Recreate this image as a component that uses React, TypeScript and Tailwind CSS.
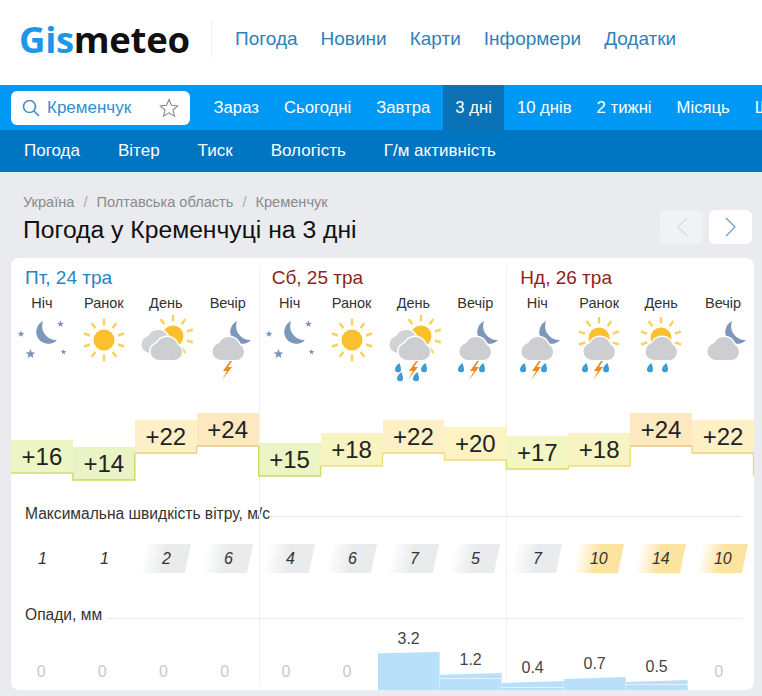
import React from "react";

const SANS = "font-['Liberation_Sans',Arial,sans-serif]";

type IconParts = {
  stars?: boolean;
  sun?: boolean;
  behindSun?: boolean;
  halfSun?: boolean;
  moon?: boolean;
  cloud?: boolean;
  backCloud?: boolean;
  bolt?: boolean;
  drops?: number[][];
};

const twoDrops = [
  [18, 52],
  [39, 52],
];
const fourDrops = [
  [16, 52],
  [42, 52],
  [18, 61],
  [34, 61],
];

const icons: IconParts[] = [
  { stars: true, moon: true },
  { sun: true },
  { behindSun: true, backCloud: true, cloud: true },
  { moon: true, cloud: true, bolt: true },
  { stars: true, moon: true },
  { sun: true },
  { behindSun: true, backCloud: true, cloud: true, bolt: true, drops: fourDrops },
  { moon: true, cloud: true, bolt: true, drops: twoDrops },
  { moon: true, cloud: true, bolt: true, drops: twoDrops },
  { halfSun: true, cloud: true, bolt: true, drops: twoDrops },
  {
    halfSun: true,
    cloud: true,
    drops: [
      [21, 52],
      [36, 52],
    ],
  },
  { moon: true, cloud: true },
];

const Rays = ({ cx, cy }: { cx: number; cy: number }) => {
  const rays = [];
  for (let a = 0; a < 360; a += 36) {
    const r = (a * Math.PI) / 180;
    rays.push(
      <line
        key={a}
        x1={cx + Math.sin(r) * 14.5}
        y1={cy - Math.cos(r) * 14.5}
        x2={cx + Math.sin(r) * 21}
        y2={cy - Math.cos(r) * 21}
        stroke="#f8d25c"
        strokeWidth="2.4"
      />
    );
  }
  return <g>{rays}</g>;
};

const CloudShape = ({ dx = 0, dy = 0, fill, stroke }: { dx?: number; dy?: number; fill: string; stroke?: string }) => (
  <g transform={`translate(${dx} ${dy})`} fill={fill} stroke={stroke} strokeWidth={stroke ? 3 : 0}>
    <circle cx="24" cy="36.500" r="8.500" />
    <circle cx="32" cy="33" r="11" />
    <circle cx="39" cy="37" r="8" />
    <rect x="24" y="36" width="15" height="9" />
  </g>
);

const Star = ({ x, y, r }: { x: number; y: number; r: number }) => {
  const pts = [];
  for (let i = 0; i < 10; i++) {
    const a = (i * Math.PI) / 5;
    const d = i % 2 === 0 ? r : r * 0.45;
    pts.push(`${x + Math.sin(a) * d},${y - Math.cos(a) * d}`);
  }
  return <polygon points={pts.join(" ")} fill="#7c97b9" />;
};

const Drop = ({ x, y }: { x: number; y: number }) => (
  <path
    d={`M${x + 2.5} ${y - 4}c-2 1.6 -4.5 4 -4.5 6.2a3 3 0 0 0 6 .2c0 -2 -.8 -4.2 -1.5 -6.4z`}
    fill="#3c9bd8"
  />
);

const WeatherIcon = ({ parts }: { parts: IconParts }) => {
  return (
    <svg width="62" height="70" viewBox="0 0 62 70" className="block mx-auto">
      {parts.stars && (
        <g>
          <Star x={10} y={19} r={3.500} />
          <Star x={49.500} y={9} r={3.500} />
          <Star x={19.500} y={39} r={5} />
          <Star x={52.500} y={37} r={3} />
        </g>
      )}
      {parts.moon && (
        <path
          transform={parts.stars ? undefined : "translate(8 0)"}
          d="M32 6A12 12 0 1 0 46 25A14 14 0 0 1 32 6z"
          fill="#7c97b9"
        />
      )}
      {parts.sun && (
        <g>
          <Rays cx={31} cy={25} />
          <circle cx="31" cy="25" r="10.500" fill="#fbc02d" />
        </g>
      )}
      {parts.behindSun && (
        <g>
          <Rays cx={38} cy={21} />
          <circle cx="38" cy="21" r="10.500" fill="#fbc02d" />
        </g>
      )}
      {parts.halfSun && (
        <g>
          <Rays cx={31} cy={23} />
          <circle cx="31" cy="23" r="10.500" fill="#fbc02d" />
        </g>
      )}
      {parts.backCloud && <CloudShape dx={-9} dy={-7} fill="#fff" stroke="#fff" />}
      {parts.backCloud && <CloudShape dx={-9} dy={-7} fill="#d0d2d5" />}
      {parts.cloud && <CloudShape fill="#fff" stroke="#fff" />}
      {parts.cloud && <CloudShape fill="#ccced1" />}
      {parts.drops && parts.drops.map(([x, y]) => <Drop key={`${x}-${y}`} x={x - 2} y={y} />)}
      {parts.bolt && <path d="M33 46l-7 10h4l-5 9 10-13h-4l4-6z" fill="#ee8a22" />}
    </svg>
  );
};

const times = ["Ніч", "Ранок", "День", "Вечір"];

const days = [
  { label: "Пт, 24 тра", cls: "text-[#1f86c2] pl-[14px]" },
  { label: "Сб, 25 тра", cls: "text-[#8f1f22] pl-[13px]" },
  { label: "Нд, 26 тра", cls: "text-[#8f1f22] pl-[14px]" },
];

const temps = [
  { t: "+16", mt: "mt-[55px]", bg: "bg-[#eef5c4]" },
  { t: "+14", mt: "mt-[62px]", bg: "bg-[#e8f3c6]" },
  { t: "+22", mt: "mt-[35px]", bg: "bg-[#fdefc6]" },
  { t: "+24", mt: "mt-[28px]", bg: "bg-[#fde8c0]" },
  { t: "+15", mt: "mt-[58px]", bg: "bg-[#ebf4c4]" },
  { t: "+18", mt: "mt-[48px]", bg: "bg-[#f8f4c2]" },
  { t: "+22", mt: "mt-[35px]", bg: "bg-[#fdefc6]" },
  { t: "+20", mt: "mt-[42px]", bg: "bg-[#fdf2c2]" },
  { t: "+17", mt: "mt-[51px]", bg: "bg-[#f3f5c2]" },
  { t: "+18", mt: "mt-[48px]", bg: "bg-[#f8f4c2]" },
  { t: "+24", mt: "mt-[28px]", bg: "bg-[#fde8c0]" },
  { t: "+22", mt: "mt-[35px]", bg: "bg-[#fdefc6]" },
];

// bottom edge of each temperature step, measured from the top of the chart
const stepBottoms = [88, 95, 68, 61, 91, 81, 68, 75, 84, 81, 61, 68, 91];
const stepColors = [
  "#cfdd62",
  "#c6d85c",
  "#ecd47e",
  "#e9c77f",
  "#c9d95e",
  "#eadf72",
  "#ecd47e",
  "#f0dc70",
  "#dfdc5c",
  "#eadf72",
  "#e9c77f",
  "#ecd47e",
];

const grayStripe = "bg-linear-to-r from-white to-[#e9ebed] to-50%";
const yellowStripe = "bg-linear-to-r from-white to-[#fde3a0] to-50%";

const wind = [
  { v: "1", bg: "" },
  { v: "1", bg: "" },
  { v: "2", bg: grayStripe },
  { v: "6", bg: grayStripe },
  { v: "4", bg: grayStripe },
  { v: "6", bg: grayStripe },
  { v: "7", bg: grayStripe },
  { v: "5", bg: grayStripe },
  { v: "7", bg: grayStripe },
  { v: "10", bg: yellowStripe },
  { v: "14", bg: yellowStripe },
  { v: "10", bg: yellowStripe },
];

const rain = [
  { v: "0", bar: "", line: "" },
  { v: "0", bar: "", line: "" },
  { v: "0", bar: "", line: "" },
  { v: "0", bar: "", line: "" },
  { v: "0", bar: "", line: "" },
  { v: "0", bar: "", line: "" },
  { v: "3.2", bar: "h-[38px] [clip-path:polygon(0_3%,100%_0,100%_100%,0_100%)]", line: "" },
  { v: "1.2", bar: "h-[17px] [clip-path:polygon(0_10%,100%_0,100%_100%,0_100%)]", line: "mt-[5px]" },
  { v: "0.4", bar: "h-[9px] [clip-path:polygon(0_22%,100%_0,100%_100%,0_100%)]", line: "mt-[6px]" },
  { v: "0.7", bar: "h-[13px] [clip-path:polygon(0_15%,100%_0,100%_100%,0_100%)]", line: "" },
  { v: "0.5", bar: "h-[10px] [clip-path:polygon(0_20%,100%_0,100%_100%,0_100%)]", line: "mt-[4px]" },
  { v: "0", bar: "", line: "" },
];

const topLinks = ["Погода", "Новини", "Карти", "Інформери", "Додатки"];
const tabs = ["Зараз", "Сьогодні", "Завтра", "3 дні", "10 днів", "2 тижні", "Місяць", "Ще"];
const subLinks = ["Погода", "Вітер", "Тиск", "Вологість", "Г/м активність"];

const App = () => {
  return (
    <div className={`${SANS} w-[762px] h-[696px] overflow-hidden bg-[#e9ebee] text-[#333]`}>
      <header className="h-[85px] bg-white flex items-center pb-[7px]">
        <div className="ml-[19px] w-[173px] text-[36.500px] leading-none font-bold tracking-[-0.3px] font-['Open_Sans',sans-serif] text-[#111]">
          <span className="text-[#1e96e8]">Gis</span>meteo
        </div>
        <div className="ml-[19px] w-px h-[37px] bg-[#eeeeee]" />
        <nav className="ml-[23px] flex gap-[23px] text-[19px] text-[#2f7fb9]">
          {topLinks.map((l) => (
            <span key={l}>{l}</span>
          ))}
        </nav>
      </header>

      <div className="h-[45px] bg-[#0098f5] flex items-center">
        <div className="ml-[11px] w-[179px] shrink-0 h-[34px] bg-white rounded-[6px] flex items-center pl-[11px] pr-[11px]">
          <svg width="18" height="18" viewBox="0 0 18 18" fill="none" stroke="#4f8fbe" strokeWidth="1.700">
            <circle cx="7.500" cy="7.500" r="6" />
            <path d="M12 12l5 5" />
          </svg>
          <span className="ml-[7px] text-[17px] text-[#2d8fd2]">Кременчук</span>
          <svg width="20" height="20" viewBox="0 0 20 20" className="ml-auto" fill="none" stroke="#8a8a8a" strokeWidth="1.100">
            <path d="M10 1.500l2.500 5.800 6.300.6-4.800 4.100 1.500 6.200-5.500-3.300-5.500 3.300 1.500-6.200L1.200 7.900l6.300-.6z" />
          </svg>
        </div>
        <div className="ml-[11px] flex h-full min-w-0 text-[16.700px] text-white overflow-hidden">
          {tabs.map((t) => (
            <span
              key={t}
              className={`px-[12.500px] flex items-center whitespace-nowrap ${t === "3 дні" ? "bg-[#0b72b6]" : ""}`}
            >
              {t}
            </span>
          ))}
        </div>
      </div>

      <div className="h-[42px] bg-[#0076c2] flex items-center pl-[24px] gap-[38px] text-[17px] text-white">
        {subLinks.map((l) => (
          <span key={l}>{l}</span>
        ))}
      </div>

      <div className="mt-[22px] h-[18px] ml-[23px] flex items-center text-[14.600px] text-[#8a8a8a]">
        <span>Україна</span>
        <span className="mx-[9px] text-[#aaa]">/</span>
        <span>Полтавська область</span>
        <span className="mx-[9px] text-[#aaa]">/</span>
        <span>Кременчук</span>
      </div>

      <div className="mt-[-2px] h-[34px] pl-[23px] pr-[10px] flex items-center justify-between">
        <h1 className="pt-[5px] text-[24.700px] text-[#111]">Погода у Кременчуці на 3 дні</h1>
        <div className="flex gap-[6px]">
          <div className="w-[43px] h-[34px] rounded-[6px] bg-[#f1f2f4] flex items-center justify-center">
            <svg width="12" height="20" viewBox="0 0 12 20" fill="none" stroke="#d5dbe2" strokeWidth="1.200">
              <path d="M11 1L2 10l9 9" />
            </svg>
          </div>
          <div className="w-[43px] h-[34px] rounded-[6px] bg-white flex items-center justify-center">
            <svg width="12" height="20" viewBox="0 0 12 20" fill="none" stroke="#6f9cc4" strokeWidth="1.200">
              <path d="M1 1l9 9-9 9" />
            </svg>
          </div>
        </div>
      </div>

      <main className="relative mt-[14px] ml-[11px] w-[743px] h-[432px] bg-white rounded-[8px] overflow-hidden">
        {/* day dividers */}
        <div className="absolute left-[248px] top-[8px] bottom-[4px] w-px bg-[#f0f0f0]" />
        <div className="absolute left-[495px] top-[8px] bottom-[4px] w-px bg-[#f0f0f0]" />

        <div className="grid grid-cols-3 pt-[8px] h-[32px] text-[19px] leading-[24px]">
          {days.map((d) => (
            <div key={d.label} className={d.cls}>
              {d.label}
            </div>
          ))}
        </div>

        <div className="grid grid-cols-12 mt-[3px] text-[14.500px] leading-[20px] text-center">
          {days.flatMap((d) => times.map((t) => <div key={d.label + t}>{t}</div>))}
        </div>

        <div className="grid grid-cols-12 mt-[2px]">
          {icons.map((p, i) => (
            <WeatherIcon key={i} parts={p} />
          ))}
        </div>

        <div className="relative grid grid-cols-12 h-[105px] items-start">
          {temps.map((c, i) => (
            <div
              key={i}
              className={`${c.mt} ${c.bg} h-[33px] flex items-center justify-center text-[24px] leading-none text-[#222]`}
            >
              {c.t}
            </div>
          ))}
          <svg className="absolute left-0 top-0" width="743" height="105" fill="none" strokeWidth="1.300">
            {stepColors.map((color, i) => {
              const w = 743 / 12;
              const x1 = i * w;
              const x2 = (i + 1) * w;
              const b = stepBottoms[i];
              const prev = i > 0 ? stepBottoms[i - 1] : b;
              const next = stepBottoms[i + 1];
              return (
                <path key={i} d={`M${x1} ${Math.min(prev, b)}V${b}H${x2}V${Math.min(next, b)}`} stroke={color} />
              );
            })}
            <path d="M742.500 68V91" stroke="#ecd47e" />
          </svg>
        </div>

        <div className="mt-[16px] h-[20px] flex items-center pl-[14px] pr-[12px]">
          <span className="pb-[4px] text-[15.600px] whitespace-nowrap">Максимальна швидкість вітру, м/с</span>
          <div className="flex-1 h-px bg-[#ececec]" />
        </div>

        <div className="grid grid-cols-12 mt-[18px]">
          {wind.map((c, i) => (
            <div key={i} className={`${c.bg} ml-[7px] w-[46px] h-[29px] -skew-x-12 flex items-center justify-center pl-[2px] pt-[1px]`}>
              <span className="skew-x-12 text-[16px] italic text-[#333]">{c.v}</span>
            </div>
          ))}
        </div>

        <div className="mt-[35px] h-[20px] flex items-center pl-[14px] pr-[12px]">
          <span className="pb-[6px] text-[15.600px] whitespace-nowrap">Опади, мм</span>
          <div className="ml-[5px] flex-1 h-px bg-[#ececec]" />
        </div>

        <div className="grid grid-cols-[repeat(6,61.2px)_repeat(6,62px)] ml-[-0.5px] h-[62px] items-end text-center text-[16px] leading-[20px]">
          {rain.map((c, i) => (
            <div key={i} className="flex flex-col justify-end">
              <span className={c.bar ? "mb-[3px] text-[#444]" : "mb-[8px] text-[#c9c9c9]"}>{c.v}</span>
              {c.bar && (
                <div className={`${c.bar} bg-[#b9e0fb] flex flex-col`}>
                  {c.line && <div className={`${c.line} h-px bg-white/60`} />}
                </div>
              )}
            </div>
          ))}
        </div>
      </main>
    </div>
  );
};

export default App;
